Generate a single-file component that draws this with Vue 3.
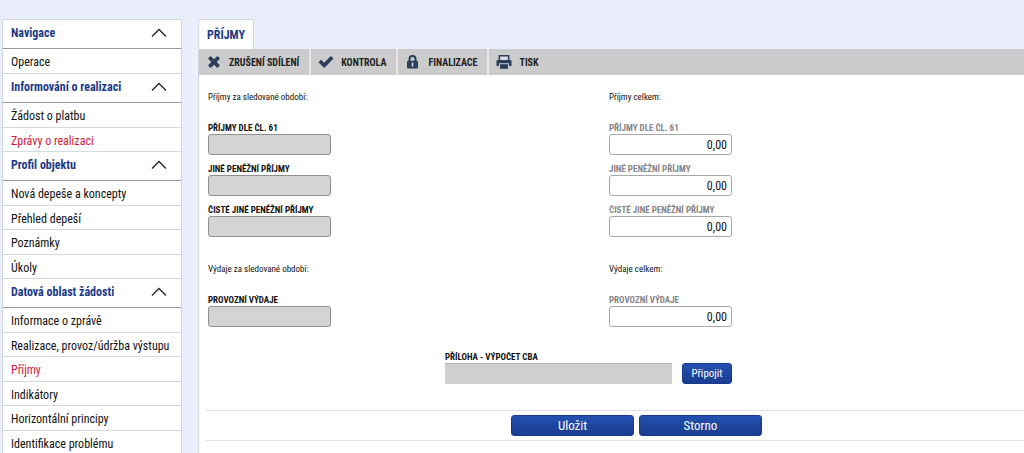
<script setup>
import { ref } from 'vue'

const groups = ref([
  { title: 'Navigace', open: true, items: ['Operace'] },
  { title: 'Informování o realizaci', open: true, items: ['Žádost o platbu', 'Zprávy o realizaci'] },
  { title: 'Profil objektu', open: true, items: ['Nová depeše a koncepty', 'Přehled depeší', 'Poznámky', 'Úkoly'] },
  {
    title: 'Datová oblast žádosti',
    open: true,
    items: ['Informace o zprávě', 'Realizace, provoz/údržba výstupu', 'Příjmy', 'Indikátory', 'Horizontální principy', 'Identifikace problému'],
  },
])
const active = ['Zprávy o realizaci', 'Příjmy']

const sections = [
  { id: 'p', period: 'Příjmy za sledované období:', total: 'Příjmy celkem:', fields: ['Příjmy dle čl. 61', 'Jiné peněžní příjmy', 'Čisté jiné peněžní příjmy'] },
  { id: 'v', period: 'Výdaje za sledované období:', total: 'Výdaje celkem:', fields: ['Provozní výdaje'] },
]
</script>

<template>
  <div class="page">
    <nav class="sidebar">
      <section v-for="g in groups" :key="g.title">
        <button class="group" type="button" :aria-expanded="g.open" @click="g.open = !g.open">
          <span>{{ g.title }}</span>
          <svg :class="{ closed: !g.open }" width="16" height="10" viewBox="0 0 16 10" aria-hidden="true">
            <path d="M1 8.5 8 1.5 15 8.5" fill="none" stroke="#222" stroke-width="1.3" />
          </svg>
        </button>
        <ul v-if="g.open">
          <li v-for="item in g.items" :key="item">
            <a href="#" :class="{ active: active.includes(item) }">{{ item }}</a>
          </li>
        </ul>
      </section>
    </nav>

    <main class="main">
      <h1 class="tab">PŘÍJMY</h1>
      <div class="panel">
        <div class="toolbar">
          <button type="button">
            <svg width="16" height="14" viewBox="0 0 16 14" aria-hidden="true">
              <path d="M4.6 1 8 4.3 11.4 1 14 3.6 10.7 7 14 10.4 11.4 13 8 9.7 4.6 13 2 10.4 5.3 7 2 3.6Z" fill="#2b3e5c" />
            </svg>
            <span>ZRUŠENÍ SDÍLENÍ</span>
          </button>
          <button type="button">
            <svg width="16" height="14" viewBox="0 0 16 14" aria-hidden="true">
              <path d="M.5 7.3 3 4.7 6.2 7.7 12.8 1 15.5 3.6 6.3 13Z" fill="#2b3e5c" />
            </svg>
            <span>KONTROLA</span>
          </button>
          <button type="button">
            <svg width="16" height="14" viewBox="0 0 16 14" aria-hidden="true">
              <path d="M4.5 7V4a3 3 0 0 1 6 0v3" fill="none" stroke="#2b3e5c" stroke-width="2" />
              <rect x="2" y="5.8" width="11" height="7.7" rx="1" fill="#2b3e5c" />
              <path d="M7.5 7.5v4" stroke="#d5dae2" stroke-width="1.6" />
            </svg>
            <span>FINALIZACE</span>
          </button>
          <button type="button">
            <svg width="16" height="14" viewBox="0 0 16 14" aria-hidden="true">
              <path d="M3.4 5V.8h9.2V5" fill="#dde1e7" stroke="#2b3e5c" stroke-width="1.6" />
              <path d="M1.5 5h13a1 1 0 0 1 1 1v5h-15V6a1 1 0 0 1 1-1Z" fill="#2b3e5c" />
              <rect x="3" y="8.2" width="10" height="5.8" fill="#cbcbcb" />
              <rect x="4" y="9.2" width="8" height="4.6" fill="#2b3e5c" />
            </svg>
            <span>TISK</span>
          </button>
        </div>

        <form class="form" @submit.prevent>
          <section v-for="s in sections" :key="s.id" class="columns">
            <div>
              <h2>{{ s.period }}</h2>
              <div v-for="(f, i) in s.fields" :key="f" class="field">
                <label :for="`${s.id}-period-${i}`">{{ f.toUpperCase() }}</label>
                <input :id="`${s.id}-period-${i}`" type="text" class="locked" readonly />
              </div>
            </div>
            <div>
              <h2>{{ s.total }}</h2>
              <div v-for="(f, i) in s.fields" :key="f" class="field muted">
                <label :for="`${s.id}-total-${i}`">{{ f.toUpperCase() }}</label>
                <input :id="`${s.id}-total-${i}`" type="text" value="0,00" readonly />
              </div>
            </div>
          </section>

          <div class="attachment">
            <div class="field">
              <label for="attachment">PŘÍLOHA - VÝPOČET CBA</label>
              <input id="attachment" type="text" readonly />
            </div>
            <button type="button" class="primary attach">Připojit</button>
          </div>

          <div class="actions">
            <button type="submit" class="primary">Uložit</button>
            <button type="button" class="primary">Storno</button>
          </div>
        </form>
      </div>
    </main>
  </div>
</template>

<style>
html {
  scrollbar-width: none;
}
body {
  margin: 0;
  background: #ebeffc;
}
</style>

<style scoped>
.page {
  display: flex;
  gap: 16px;
  min-height: 100vh;
  box-sizing: border-box;
  padding: 19px 0 0 2px;
  font-family: "Roboto Condensed", "Liberation Sans Narrow", Roboto, sans-serif;
  font-size: 12px;
  color: #111;
}
button,
input {
  font: inherit;
  box-sizing: border-box;
}
button {
  cursor: pointer;
}
.sidebar {
  flex: none;
  width: 180px;
  box-sizing: border-box;
  border: 1px solid #d3d6dc;
  border-bottom: 0;
  border-radius: 3px 3px 0 0;
  background: #fff;
}
.group {
  display: flex;
  align-items: center;
  justify-content: space-between;
  width: 100%;
  height: 29px;
  padding: 0 14px 3px 8px;
  border: 0;
  border-bottom: 1px solid #9a9a9a;
  background: none;
  color: #1b3a86;
  font-weight: bold;
}
.closed {
  transform: rotate(180deg);
}
ul {
  margin: 0;
  padding: 0;
  list-style: none;
}
li {
  height: 25px;
  box-sizing: border-box;
  border-bottom: 1px solid #d5dadd;
}
li:nth-child(even) {
  height: 24px;
}
a {
  display: block;
  padding-left: 8px;
  line-height: 26px;
  color: inherit;
  text-decoration: none;
  white-space: nowrap;
}
a.active {
  color: #cf1c36;
}
.main {
  flex: 1;
  min-width: 0;
  display: flex;
  flex-direction: column;
}
.tab {
  align-self: flex-start;
  margin: 0;
  padding: 2px 8px 0;
  line-height: 27px;
  border: 1px solid #d3d6dc;
  border-bottom: 0;
  border-radius: 3px 3px 0 0;
  background: #fff;
  color: #1b3a86;
  font-size: 12px;
}
.panel {
  flex: 1;
  border-left: 1px solid #d3d6dc;
  background: #fff;
}
.toolbar {
  display: flex;
  height: 26px;
  background: #cbcbcb;
}
.toolbar button {
  display: flex;
  align-items: center;
  gap: 7px;
  padding: 0 10px 0 7px;
  border: 0;
  border-right: 2px solid #e6e6e6;
  background: none;
  color: #222;
  font-size: 10px;
  font-weight: bold;
}
.toolbar button:last-child {
  border-right: 0;
}
.form {
  padding-top: 16px;
}
.columns {
  display: grid;
  grid-template-columns: 1fr 1fr;
  padding: 0 14px 0 9px;
}
.columns + .columns {
  margin-top: 18px;
}
h2 {
  margin: 0 0 19px;
  font-size: 9px;
  line-height: 12px;
  font-weight: normal;
}
.field label {
  display: block;
  font-size: 9px;
  line-height: 12px;
  font-weight: bold;
  white-space: nowrap;
}
.field input {
  display: block;
  width: 123px;
  height: 21px;
  padding: 0 4px;
  border: 1px solid #a8a8a8;
  border-radius: 3px;
  background: #fff;
  color: #111;
  text-align: right;
}
.columns .field {
  margin-bottom: 8px;
}
.field .locked {
  border-color: #8f8f8f;
  background: #d4d4d4;
}
.muted label {
  color: #858585;
}
.attachment {
  display: flex;
  align-items: flex-end;
  gap: 10px;
  margin: 16px 0 0 246px;
}
.attachment .field input {
  width: 227px;
  border: 0;
  border-top: 1px solid #b5b5b5;
  border-radius: 0;
  background: #cfcfcf;
}
.primary {
  width: 123px;
  height: 21px;
  padding: 0;
  border: 1px solid #173a8c;
  border-radius: 3px;
  background: linear-gradient(#2350b0, #1a3d90);
  color: #fff;
  font-size: 13px;
}
.primary.attach {
  width: 50px;
  font-size: 11px;
}
.actions {
  display: flex;
  justify-content: center;
  gap: 5px;
  margin: 26px 0 0 7px;
  padding: 4px 0 4px 43px;
  border: solid #e2e2e2;
  border-width: 1px 0;
}
</style>
